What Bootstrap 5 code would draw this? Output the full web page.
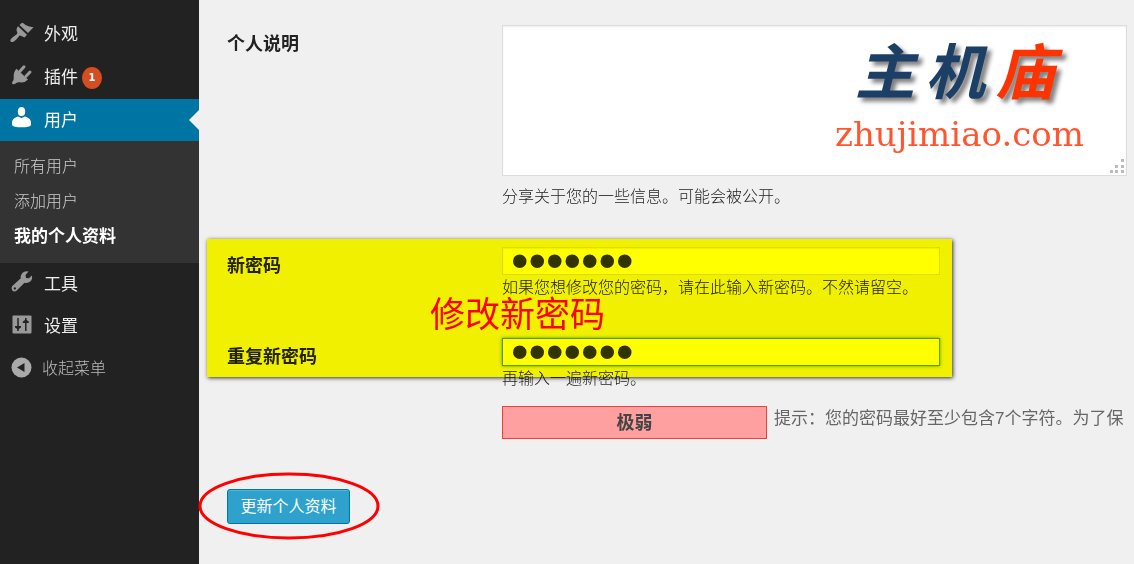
<!DOCTYPE html>
<html lang="zh-CN">
<head>
<meta charset="utf-8">
<meta name="viewport" content="width=device-width, initial-scale=1">
<title>我的个人资料</title>
<link rel="stylesheet" href="https://cdn.jsdelivr.net/npm/bootstrap@5.3.0/dist/css/bootstrap.min.css">
<style>
  body { background: #f0f0f0; color: #222; font-family: "Liberation Sans", "Noto Sans CJK SC", sans-serif; font-size: 16px; line-height: 22px; overflow-x: hidden; }
  .admin-side { width: 199px; background: #222; padding-top: 13px; }
  .menu-item { height: 42px; padding-left: 11px; gap: 11px; color: #eee; font-size: 17px; text-decoration: none; }
  .menu-item svg { width: 22px; height: 22px; fill: #999; flex: none; overflow: visible; }
  .menu-item > span { padding-top: 2px; }
  .menu-gap { margin-bottom: 1px; }
  .menu-item.current { background: #0074a2; color: #fff; position: relative; }
  .menu-item.current svg { fill: #fff; }
  .menu-item.current::after { content: ""; position: absolute; right: 0; top: 11px; border: 10px solid transparent; border-left: 0; border-right-color: #f0f0f0; }
  .update-count { background: #d54e21; color: #fff; width: 20px; height: 22px; border-radius: 50%; font: bold 10px/22px "DejaVu Sans", sans-serif; text-align: center; margin-left: 4px; }
  .collapse-btn { background: none; border: 0; color: #bbb; font-size: 16px; width: 100%; gap: 9px; text-align: left; }
  .collapse-btn svg { fill: #aaa; }
  .submenu { background: #333; padding: 8px 0 9px 14px; }
  .submenu a { display: block; line-height: 35px; color: #ccc; text-decoration: none; }
  .submenu a.active { color: #fff; font-weight: 700; font-size: 17px; }
  .profile { padding: 25px 0 24px 28px; min-width: 0; }
  .field-row { margin-bottom: 39px; }
  .field-label { width: 275px; flex: none; padding-top: 8px; font-size: 18px; font-weight: 700; color: #222; }
  .field-body { min-width: 0; }
  .wp-field { border: 1px solid #ddd; border-radius: 0; background: #fff; box-shadow: inset 0 1px 2px rgba(0,0,0,.07); }
  .bio-wrap { margin-right: 7px; }
  .bio { height: 151px; resize: none; display: block; }
  .bio-help { margin-top: 10px; }
  .pass { max-width: 438px; height: 28px; padding: 0 8px; color: #333; font: 50px/26px "Liberation Sans", sans-serif; }
  .pass.is-focused { border-color: #5b9dd9; box-shadow: 0 0 3px rgba(30,140,190,.8); }
  .pass-help { margin-top: 2px; }
  .grip { right: 2px; bottom: 2px; pointer-events: none; }
  .site-logo { right: 38px; top: 9px; width: 254px; pointer-events: none; }
  .logo-cn { font-size: 60px; line-height: 80px; font-weight: 700; font-style: italic; color: #1c3f66; text-shadow: 4px 4px 4px rgba(0,0,0,.5); gap: 10px; padding-left: 20px; }
  .logo-cn .hot { color: #f30; }
  .logo-url { font: 34px/40px "DejaVu Serif", serif; color: #ff5630; }
  .marker { left: -20px; top: -8px; width: 745px; height: 138px; background: #ff0; mix-blend-mode: multiply; box-shadow: 1px 1px 4px rgba(0,0,0,.8); pointer-events: none; }
  .note { left: 203px; top: 48px; font-size: 35px; line-height: 40px; color: #f00; white-space: nowrap; pointer-events: none; }
  .strength { width: 265px; height: 33px; flex: none; background: #ffa0a0; border: 1px solid #f04040; color: #444; font-weight: 700; font-size: 18px; line-height: 33px; }
  .strength-row { margin-top: 16px; gap: 7px; }
  .hint { color: #666; font-size: 17px; white-space: nowrap; padding-top: 2px; }
  .save-area { margin-top: 50px; }
  .btn-save { --bs-btn-padding-x: 12px; --bs-btn-padding-y: 0; min-width: 123px; height: 35px; background: #2ea2cc; border: 1px solid #0074a2; border-radius: 3px; box-shadow: inset 0 1px 0 rgba(120,200,230,.5); color: #fff; font-size: 16px; line-height: 33px; }
  .ring { left: -29px; top: -17px; pointer-events: none; }
  .light { font-weight: 300; }
</style>
</head>
<body>
<div class="d-flex min-vh-100">
  <nav class="admin-side flex-shrink-0" aria-label="管理菜单">
    <a href="#" class="menu-item menu-gap d-flex align-items-center">
      <svg viewBox="0 0 22 22"><path d="M8.500 2 L11 -.2 Q13 .2 14.500 2 Q18 3.800 22.500 4.200 L17 10Z M7 3.300 L16 11.800 L13.500 14.500 L10.500 13 L8.500 12.500 Q5 17.500 2.500 18.700 Q0 19.800 -.8 17.800 Q-.8 16 2 14 L6 11 Q7 9.500 5.500 7.500 Q5 5.500 7 3.300Z"/></svg>
      <span>外观</span>
    </a>
    <a href="#" class="menu-item menu-gap d-flex align-items-center">
      <svg viewBox="0 0 22 22"><path d="M5.500 2.800 L17 13.500 Q14 17 9 16.300 Q6.500 15.800 5 17.200 Q3 19 1.500 18 Q.5 17 1.500 15.500 Q3 14.500 2.700 12 Q2.300 6 5.500 2.800Z"/><path d="M9 5.200 L13 .8 M15 10.200 L19 6" stroke="#999" stroke-width="3" stroke-linecap="round"/></svg>
      <span class="d-flex align-items-center">插件<span class="update-count">1</span></span>
    </a>
    <a href="#" class="menu-item current d-flex align-items-center" aria-current="page">
      <svg viewBox="0 2 22 22"><ellipse cx="10.500" cy="4.500" rx="3.700" ry="4.500"/><path d="M5.500 10 Q7 9 7.800 9.800 Q10.500 12 13.200 9.800 Q14 9 15.500 10 Q19.500 11.500 20 15 L20 18 Q19 20.300 10.500 20.300 Q2 20.300 1 18 L1 15 Q1.500 11.500 5.500 10Z"/></svg>
      <span>用户</span>
    </a>
    <div class="submenu">
      <a href="#" class="light">所有用户</a>
      <a href="#" class="light">添加用户</a>
      <a href="#" class="active">我的个人资料</a>
    </div>
    <a href="#" class="menu-item d-flex align-items-center">
      <svg viewBox="0 2 22 22"><path fill-rule="evenodd" d="M17.500 .5 L14.500 4 L15 7 L18 7.300 L20.800 4.500 Q22 8 19.200 10.600 Q17 12.500 13.500 11.800 L5.800 19.500 Q3.200 21.500 1.300 19.500 Q-.5 17.300 1.300 15 L9.800 7.300 Q9.300 4.500 11.300 2.100 Q14 -.6 17.500 .5Z M3.800 16.200 A1.200 1.200 0 1 0 3.900 16.200Z"/></svg>
      <span>工具</span>
    </a>
    <a href="#" class="menu-item d-flex align-items-center">
      <svg viewBox="0 0 22 22"><rect x="1.500" y=".5" width="19" height="18" rx="1"/><path d="M7 3 V16 M14.800 3 V16" stroke="#222" stroke-width="1.500"/><path d="M4 11 H10 V12.500 L7 14.500 L4 12.500Z M11.800 8 H17.800 V6.500 L14.800 4.500 L11.800 6.500Z" fill="#222"/></svg>
      <span>设置</span>
    </a>
    <button type="button" class="menu-item collapse-btn d-flex align-items-center light">
      <svg viewBox="0 0 22 22"><circle cx="10.500" cy="10.500" r="10"/><path d="M6 10.500 L13.500 6 V15Z" fill="#222"/></svg>
      <span>收起菜单</span>
    </button>
  </nav>

  <main class="profile flex-fill">
    <form>
      <div class="field-row d-flex">
        <label for="bio" class="field-label">个人说明</label>
        <div class="field-body flex-fill">
          <div class="bio-wrap position-relative">
            <textarea id="bio" class="bio wp-field w-100"></textarea>
            <div class="site-logo position-absolute">
              <div class="logo-cn d-flex"><span>主</span><span>机</span><span class="hot">庙</span></div>
              <div class="logo-url">zhujimiao.com</div>
            </div>
            <svg class="grip position-absolute" width="15" height="15" fill="#bbb"><path d="M11 0h3v3h-3z M11 6h3v3h-3z M5 6h3v3h-3z M11 11h3v3h-3z M5 11h3v3h-3z M0 11h3v3h-3z"/></svg>
          </div>
          <div class="bio-help light">分享关于您的一些信息。可能会被公开。</div>
        </div>
      </div>

      <div class="position-relative">
        <div class="field-row d-flex">
          <label for="pass1" class="field-label">新密码</label>
          <div class="field-body flex-fill">
            <input type="password" id="pass1" class="pass wp-field w-100 d-block" value="1234567">
            <div class="pass-help light">如果您想修改您的密码，请在此输入新密码。不然请留空。</div>
          </div>
        </div>
        <div class="d-flex">
          <label for="pass2" class="field-label">重复新密码</label>
          <div class="field-body flex-fill">
            <input type="password" id="pass2" class="pass wp-field is-focused w-100 d-block" value="1234567">
            <div class="pass-help light">再输入一遍新密码。</div>
            <div class="strength-row d-flex">
              <div class="strength text-center">极弱</div>
              <div class="hint">提示：您的密码最好至少包含7个字符。为了保</div>
            </div>
          </div>
        </div>
        <div class="marker position-absolute"></div>
        <div class="note position-absolute">修改新密码</div>
      </div>

      <div class="save-area position-relative d-inline-block">
        <button type="button" class="btn btn-save">更新个人资料</button>
        <svg class="ring position-absolute" width="182" height="68"><ellipse cx="91" cy="34" rx="89" ry="32" fill="none" stroke="#f00" stroke-width="3"/></svg>
      </div>
    </form>
  </main>
</div>
<script src="https://cdn.jsdelivr.net/npm/bootstrap@5.3.0/dist/js/bootstrap.bundle.min.js"></script>
</body>
</html>
